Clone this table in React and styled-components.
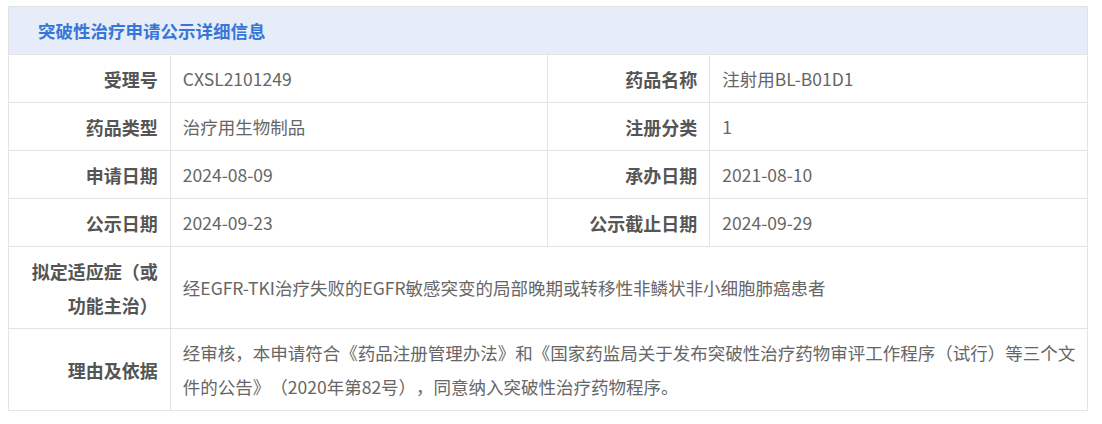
import React from 'react'
import styled, { createGlobalStyle } from 'styled-components'

const GlobalStyle = createGlobalStyle`
    body {
        margin: 6px 8px;
        background: #fff;
        font-family: "Noto Sans CJK SC", "Noto Sans", sans-serif;
    }
`

const Panel = styled.div`
    width: 1080px;
    box-sizing: border-box;
`

const PanelHeader = styled.div`
    height: 48px;
    box-sizing: border-box;
    display: flex;
    align-items: center;
    padding-left: 29px;
    background: #e6edf8;
    border: 1px solid #e2e2e2;
    border-bottom: none;
`

const PanelTitle = styled.h3`
    margin: 0;
    font-size: 17.5px;
    font-weight: 700;
    color: #3676d8;
`

const InfoTable = styled.table`
    width: 100%;
    table-layout: fixed;
    border-collapse: collapse;
`

const Label = styled.th`
    padding: 7px 12px 6px;
    border: 1px solid #e4e4e4;
    text-align: right;
    vertical-align: middle;
    font-size: 18px;
    line-height: 34px;
    font-weight: 700;
    color: #555;
`

const Value = styled.td`
    padding: 7px 10px 6px 12px;
    border: 1px solid #e4e4e4;
    text-align: left;
    vertical-align: middle;
    font-size: 17.5px;
    line-height: 34px;
    color: #666;
    text-spacing-trim: space-all;
`

const pairs = [
    [['受理号', 'CXSL2101249'], ['药品名称', '注射用BL-B01D1']],
    [['药品类型', '治疗用生物制品'], ['注册分类', '1']],
    [['申请日期', '2024-08-09'], ['承办日期', '2021-08-10']],
    [['公示日期', '2024-09-23'], ['公示截止日期', '2024-09-29']],
]

const wide = [
    ['拟定适应症（或功能主治）', '经EGFR-TKI治疗失败的EGFR敏感突变的局部晚期或转移性非鳞状非小细胞肺癌患者'],
    ['理由及依据', '经审核，本申请符合《药品注册管理办法》和《国家药监局关于发布突破性治疗药物审评工作程序（试行）等三个文件的公告》（2020年第82号），同意纳入突破性治疗药物程序。'],
]

export default function App() {
    return (
        <>
            <GlobalStyle />
            <Panel>
                <PanelHeader>
                    <PanelTitle>突破性治疗申请公示详细信息</PanelTitle>
                </PanelHeader>
                <InfoTable>
                    <colgroup>
                        <col style={{ width: '15%' }} />
                        <col style={{ width: '35%' }} />
                        <col style={{ width: '15%' }} />
                        <col style={{ width: '35%' }} />
                    </colgroup>
                    <tbody>
                        {pairs.map((row, i) =>
                            <tr key={i}>
                                {row.map(([k, v]) =>
                                    <React.Fragment key={k}>
                                        <Label>{k}</Label>
                                        <Value>{v}</Value>
                                    </React.Fragment>
                                )}
                            </tr>
                        )}
                        {wide.map(([k, v]) =>
                            <tr key={k}>
                                <Label>{k}</Label>
                                <Value colSpan={3}>{v}</Value>
                            </tr>
                        )}
                    </tbody>
                </InfoTable>
            </Panel>
        </>
    )
}
